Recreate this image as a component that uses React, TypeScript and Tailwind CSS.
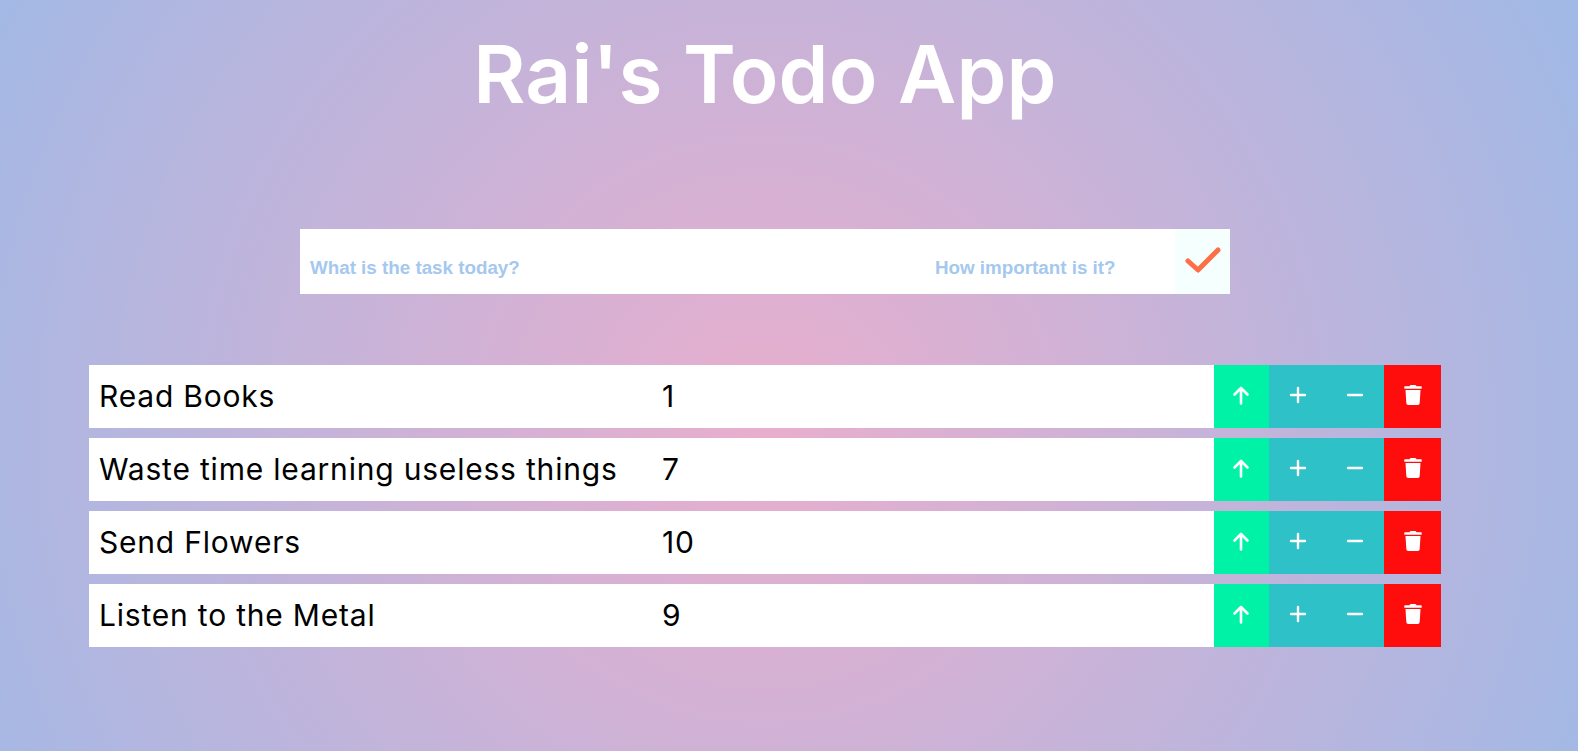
import { Minus, Plus } from "lucide-react";
import { FaTrash } from "react-icons/fa";

const todos = [
  { id: 1, name: "Read Books", rank: 1 },
  { id: 2, name: "Waste time learning useless things", rank: 7 },
  { id: 3, name: "Send Flowers", rank: 10 },
  { id: 4, name: "Listen to the Metal", rank: 9 },
];

function Row({ name, rank }: { name: string; rank: number }) {
  return (
    <div className="flex h-[63px] w-full bg-white text-[30px] tracking-[0.8px] text-black">
      <div className="flex w-[573px] items-center pl-[10px]">{name}</div>
      <div className="flex flex-1 items-center">{rank}</div>
      <button className="flex w-[55px] items-center justify-center bg-[#00f2a6] pb-[3px] pr-[1px] text-white">
        <svg width="16" height="19" viewBox="0 0 16 19" fill="none" stroke="currentColor" strokeWidth="2.6" strokeLinecap="round" strokeLinejoin="round">
          <path d="M8 17.5 V2 M1.5 8.5 L8 2 L14.5 8.5" />
        </svg>
      </button>
      <button className="flex w-[57.5px] items-center justify-center bg-[#2ec1c7] pb-[3px] text-white">
        <Plus size={24} strokeWidth={2.4} />
      </button>
      <button className="flex w-[57.5px] items-center justify-center bg-[#2ec1c7] pb-[3px] text-white">
        <Minus size={24} strokeWidth={2.4} />
      </button>
      <button className="flex w-[57px] items-center justify-center bg-[#ff0d0d] pb-[3px] text-white">
        <FaTrash size={20} />
      </button>
    </div>
  );
}

export default function App() {
  return (
    <div className="flex min-h-[751px] flex-col items-center bg-[radial-gradient(circle_at_765px_430px,#e9aecd_0%,#a0b9e6_100%)] pr-[48px] font-['Inter',sans-serif]">
      <h1 className="mt-[14px] text-[80px] leading-[120px] font-semibold tracking-[0.2px] text-white">Rai's Todo App</h1>
      <form className="mt-[95px] flex h-[65px] w-[930px] bg-white font-['Liberation_Sans',sans-serif] text-[18.8px] font-bold text-[#a5c8ee]">
        <div className="flex w-[635px] items-end pb-[12px] pl-[10px]">What is the task today?</div>
        <div className="flex flex-1 items-end pb-[12px]">How important is it?</div>
        <button className="flex w-[55px] items-center justify-center bg-[#f5fffd] pb-[3px] text-[#ff6f47]">
          <svg width="36" height="26" viewBox="0 0 36 26" fill="none" stroke="currentColor" strokeWidth="5" strokeLinecap="round" strokeLinejoin="round">
            <path d="M3 14 L13 23 L33 3" />
          </svg>
        </button>
      </form>
      <div className="mt-[71px] flex w-[1352px] flex-col gap-[10px]">
        {todos.map((t) => (
          <Row key={t.id} name={t.name} rank={t.rank} />
        ))}
      </div>
    </div>
  );
}
